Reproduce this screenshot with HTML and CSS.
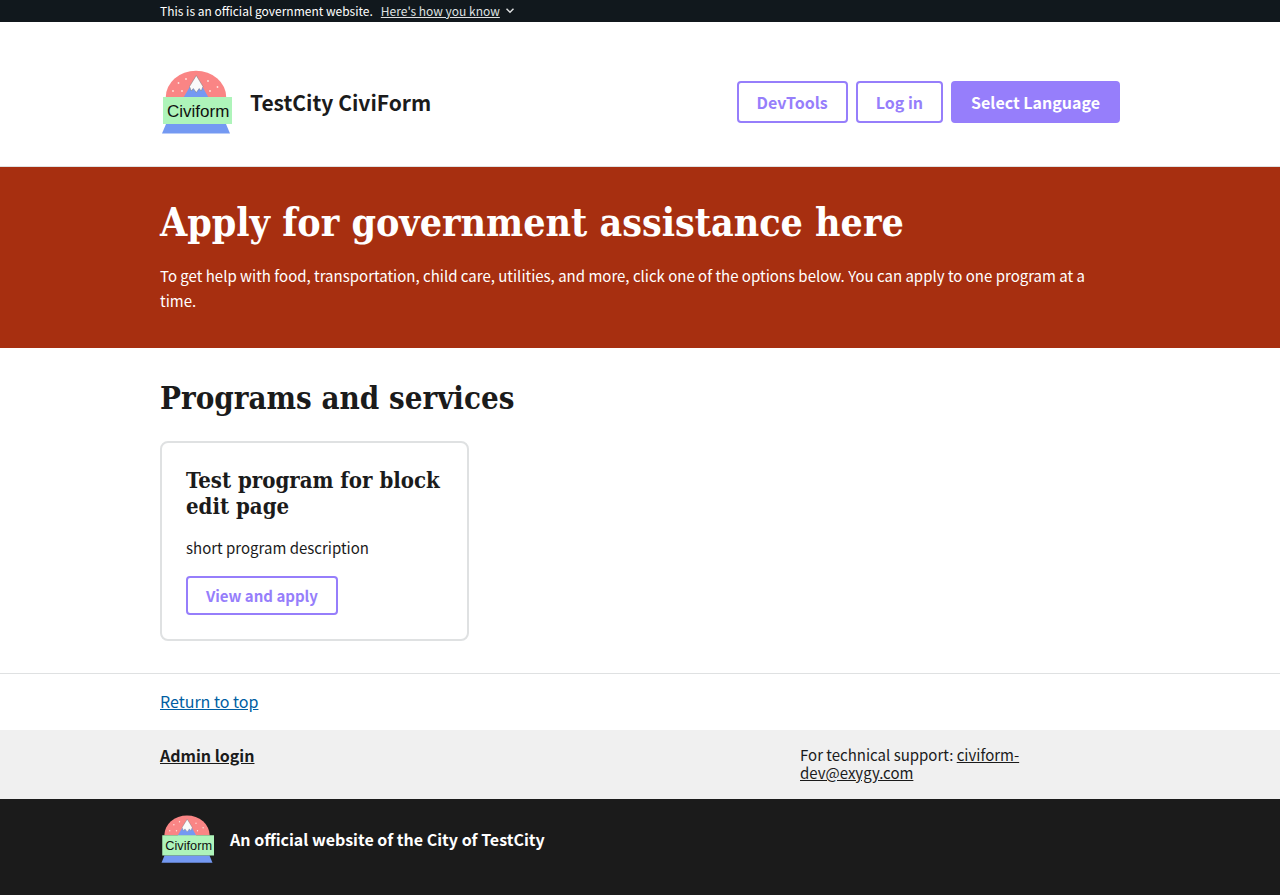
FILE: index.html
```html
<!DOCTYPE html>
<html lang="en">
<head>
<meta charset="utf-8">
<meta name="viewport" content="width=device-width, initial-scale=1">
<title>TestCity CiviForm</title>
<link rel="stylesheet" href="styles.css">
</head>
<body id="top">
<svg class="defs" aria-hidden="true">
  <symbol id="logo" viewBox="0 0 72 72">
    <path d="M5.800 31a30.200 26.200 0 0 1 60.400 0z" fill="#fa8585"/>
    <path d="M23.500 31.500 36.300 10 48.500 31.500z" fill="#7499f2"/>
    <path d="M29.500 20.500 36.300 9.500l6.700 11-1.800 4.500-2-2.500-2.900 4-3-4-2 2.500z" fill="#fafafa" stroke="#777" stroke-width=".5"/>
    <g fill="#ffe4e0"><circle cx="18.500" cy="17" r=".9"/><circle cx="26" cy="13" r=".9"/><circle cx="22" cy="25" r=".9"/><circle cx="13" cy="25" r=".9"/><circle cx="48" cy="15" r=".9"/><circle cx="57.500" cy="21" r=".9"/><circle cx="50" cy="25" r=".9"/></g>
    <path d="M6 58H66l4 9.500H2z" fill="#7499f2"/>
    <path d="M3 31H72v27H3z" fill="#aef4ba"/>
    <text x="7" y="51" class="logo-text">Civiform</text>
  </symbol>
</svg>
<section class="banner" aria-label="Official government website">
  <div class="container banner-row">
    <span>This is an official government website.</span>
    <button class="banner-button" type="button"><span class="underlined">Here's how you know</span>
      <svg width="8" height="6" viewBox="0 0 8 6" aria-hidden="true"><path d="M.5.800 4 4.300 7.500.800" fill="none" stroke="currentColor" stroke-width="1.500"/></svg>
    </button>
  </div>
</section>
<header class="header">
  <div class="container header-row">
    <a class="brand" href="#top">
      <svg class="logo" role="img" aria-label="Civiform"><use href="#logo"/></svg>
      <span>TestCity CiviForm</span>
    </a>
    <nav class="actions">
      <button class="button" type="button">DevTools</button>
      <button class="button" type="button">Log in</button>
      <button class="button button-solid" type="button">Select Language</button>
    </nav>
  </div>
</header>
<main>
  <section class="hero">
    <div class="container">
      <h1>Apply for government assistance here</h1>
      <p>To get help with food, transportation, child care, utilities, and more, click one of the options below. You can apply to one program at a time.</p>
    </div>
  </section>
  <section class="container programs">
    <h2>Programs and services</h2>
    <div class="cards">
      <article class="card">
        <h3>Test program for block edit page</h3>
        <p>short program description</p>
        <a class="button button-card" href="#top">View and apply</a>
      </article>
    </div>
  </section>
</main>
<footer>
  <div class="return"><div class="container"><a href="#top">Return to top</a></div></div>
  <div class="support">
    <div class="container support-row">
      <a class="admin" href="#top">Admin login</a>
      <span class="contact">For technical support: <a href="mailto:civiform-dev@exygy.com">civiform-dev@exygy.com</a></span>
    </div>
  </div>
  <div class="identity">
    <div class="container identity-row">
      <svg class="logo logo-small" role="img" aria-label="Civiform"><use href="#logo"/></svg>
      <span>An official website of the City of TestCity</span>
    </div>
  </div>
</footer>
</body>
</html>
```
FILE: styles.css
```css
* { box-sizing: border-box; }
body {
  margin: 0;
  min-height: 100vh;
  display: flex;
  flex-direction: column;
  background: #fff;
  color: #1b1b1b;
  font-family: "Noto Sans CJK SC", "Open Sans", sans-serif;
  font-size: 15px;
  line-height: 18px;
}
h1, h2, h3, p { margin: 0; }
h1, h2, h3 { font-family: "DejaVu Serif Condensed", "DejaVu Serif", serif; font-weight: 700; }
button { font: inherit; cursor: pointer; }
footer { display: flex; flex-direction: column; flex: 1; }
.defs { display: none; }
.container { width: 100%; max-width: 1024px; margin: 0 auto; padding: 0 32px; }
.banner { background: #11181d; color: #fff; font-size: 12px; line-height: 22px; }
.banner-row { display: flex; gap: 8px; }
.banner-button { display: flex; align-items: center; gap: 6px; padding: 0; border: 0; background: none; color: #dfe1e2; }
.underlined { text-decoration: underline; }
.header { border-bottom: 1px solid #dfe1e2; }
.header-row { display: flex; align-items: center; justify-content: space-between; padding-top: 44px; padding-bottom: 28px; }
.brand { display: flex; align-items: center; gap: 18px; color: #1b1b1b; font-size: 21px; font-weight: 700; text-decoration: none; }
.logo { width: 72px; height: 72px; flex: none; }
.logo-small { width: 54px; height: 54px; }
.logo-text { font-family: "Liberation Sans", sans-serif; font-size: 17px; font-weight: 400; fill: #111; }
.actions { display: flex; gap: 8px; font-size: 16px; }
.button {
  display: inline-block;
  padding: 10px 18px;
  border: 2px solid #967efb;
  border-radius: 4px;
  background: transparent;
  color: #967efb;
  font-weight: 700;
  text-decoration: none;
}
.button-solid { background: #967efb; color: #fff; }
.button-card { padding: 8px 18px; line-height: 19px; }
.hero { background: #a72f10; color: #fff; padding: 32px 0 35px; }
.hero h1 { font-size: 39px; line-height: 46px; }
.hero p { margin-top: 18px; line-height: 25px; }
.programs { padding-top: 32px; padding-bottom: 32px; }
.programs h2 { font-size: 31px; line-height: 36px; }
.cards { display: grid; grid-template-columns: repeat(3, 1fr); gap: 16px; margin-top: 25px; }
.card { padding: 24px; border: 2px solid #dfe1e2; border-radius: 8px; }
.card h3 { font-size: 22px; line-height: 26px; }
.card p { margin: 16px 0; line-height: 25px; }
.return { border-top: 1px solid #dfe1e2; padding: 18px 0 20px; font-size: 16px; }
.return a { color: #005ea2; }
.support { background: #f0f0f0; padding: 16px 0 17px; }
.support-row { display: grid; grid-template-columns: 2fr 1fr; }
.support a { color: #1b1b1b; }
.admin { font-size: 16px; font-weight: 700; }
.contact { max-width: 240px; }
.identity { flex: 1; background: #1b1b1b; color: #fff; padding: 13px 0 28px; font-size: 16px; font-weight: 700; }
.identity-row { display: flex; align-items: center; gap: 16px; }
```
